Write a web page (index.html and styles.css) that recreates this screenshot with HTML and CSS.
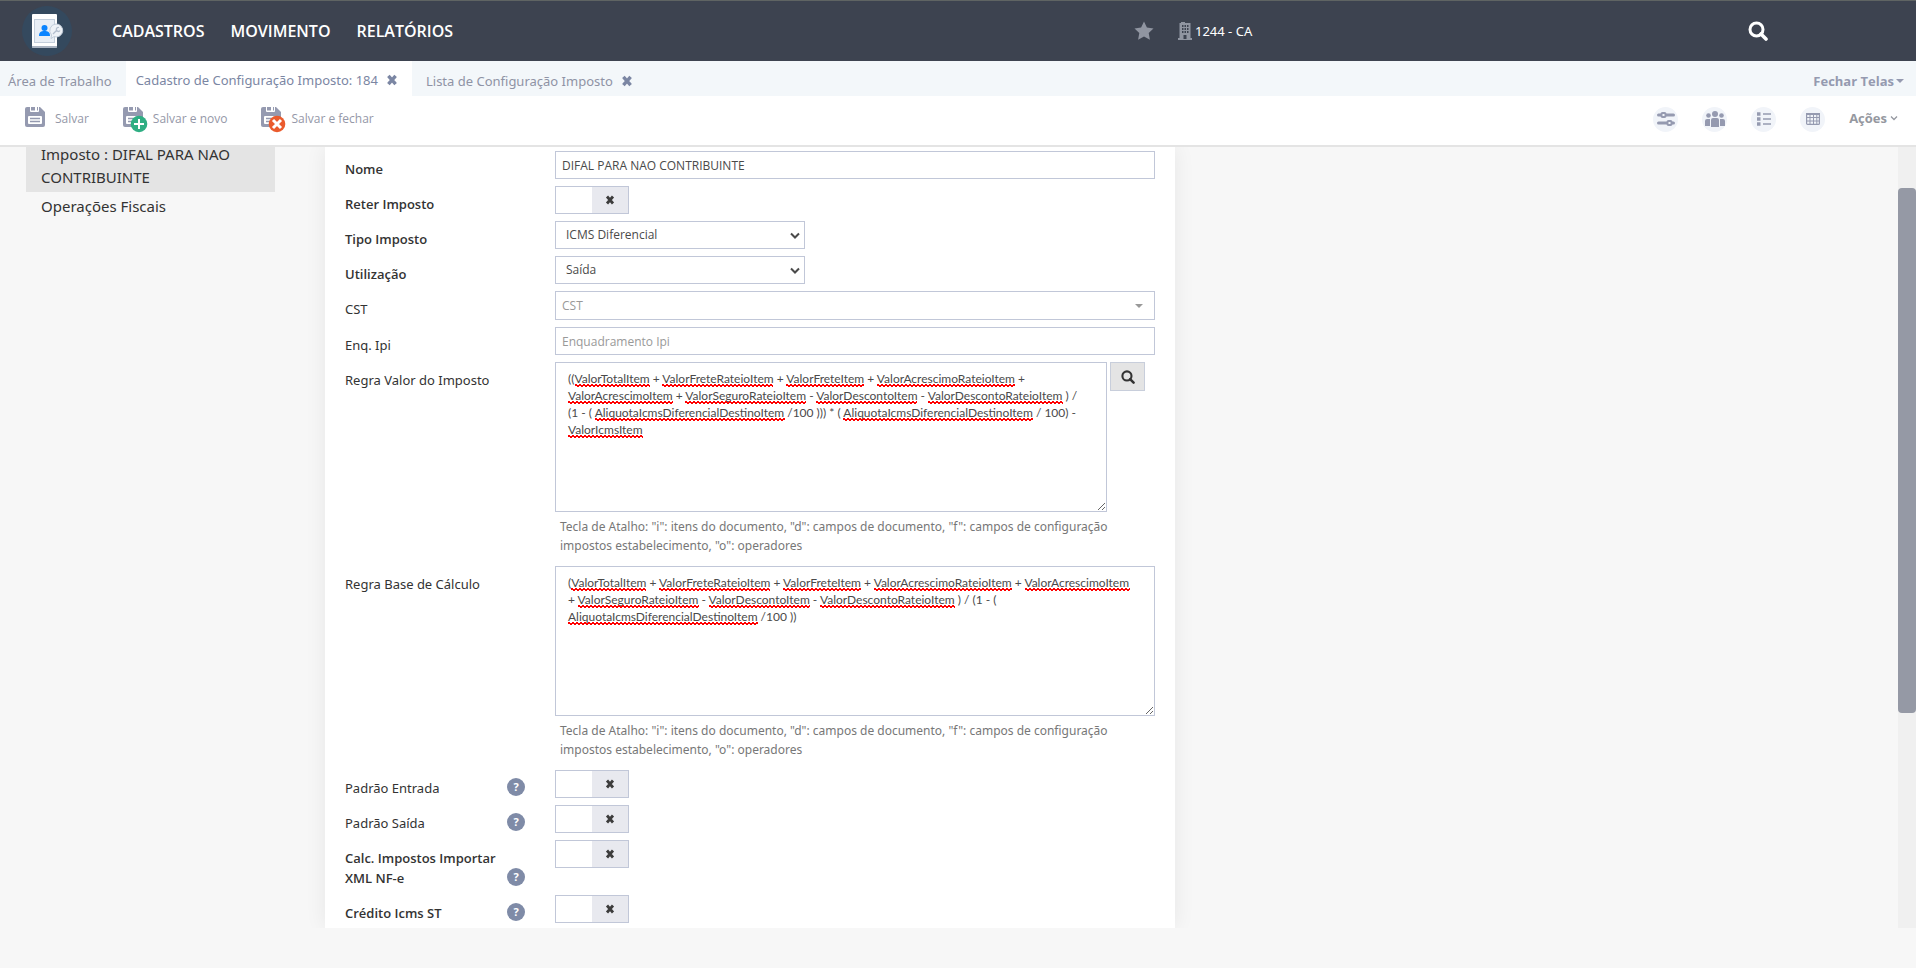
FILE: index.html
```html
<!DOCTYPE html>
<html lang="pt-BR">
<head>
    <meta charset="utf-8">
    <title>Cadastro de Configuração Imposto</title>
    <meta name="viewport" content="width=device-width, initial-scale=1.0">
    <link rel="stylesheet" href="styles.css">
</head>
<body>
    <!-- shared icons -->
    <svg class="sprite" aria-hidden="true">
        <symbol id="ico-x" viewBox="0 0 10 10">
            <path d="M2 1.500L8 8.500M8 1.500L2 8.500" stroke="currentColor" stroke-width="2.800"/>
        </symbol>
        <symbol id="ico-search" viewBox="0 0 20 20">
            <circle cx="8.500" cy="8.500" r="6.500" fill="none" stroke="currentColor" stroke-width="3"/>
            <path d="M13 13l5 5" stroke="currentColor" stroke-width="3.600" stroke-linecap="round"/>
        </symbol>
        <symbol id="ico-save" viewBox="0 0 20 20">
            <path d="M2 0h13l5 5v13a2 2 0 0 1-2 2H2a2 2 0 0 1-2-2V2a2 2 0 0 1 2-2z" fill="#959ab0"/>
            <path d="M5 0h9v4a1 1 0 0 1-1 1H6a1 1 0 0 1-1-1z" fill="#fff"/>
            <path d="M6 0h4v3.500H6zM12 0h1v3.500h-1z" fill="#959ab0"/>
            <rect x="3" y="9" width="14" height="8" rx="1" fill="#fff"/>
            <path d="M5 11.500h10M5 14.500h10" stroke="#959ab0" stroke-width="1.300"/>
        </symbol>
    </svg>

    <header class="topbar">
        <a class="logo" href="#" aria-label="Início">
            <svg width="50" height="50" viewBox="0 0 50 50">
                <circle cx="25" cy="25" r="25" fill="#34495e"/>
                <path d="M10 9a1 1 0 0 1 1-1h23a1 1 0 0 1 1 1v31a2 2 0 0 1-2 2H12a2 2 0 0 1-2-2z" fill="#fff"/>
                <path d="M10 40h25v1a1 1 0 0 1-1 1H11a1 1 0 0 1-1-1z" fill="#aab4c2"/>
                <rect x="12.500" y="13.500" width="20" height="23" fill="#e8eef5" stroke="#c3cedb"/>
                <circle cx="22.500" cy="22" r="3" fill="#0a84ff"/>
                <path d="M17 30c0-4 2-5 5.500-5s5.500 1 5.500 5z" fill="#0a84ff"/>
                <path d="M34 18a6.500 6.500 0 1 1-2 12.600l-3 2 .6-3.600A6.500 6.500 0 0 1 34 18z" fill="#eef2f7" stroke="#c3cedb" stroke-width="1"/>
                <path d="M31 28l4-4M37 21.500a2 2 0 1 0 1 3" stroke="#b4bfce" stroke-width="1.300" fill="none"/>
            </svg>
        </a>
        <nav class="menu">
            <a href="#">CADASTROS</a>
            <a href="#">MOVIMENTO</a>
            <a href="#">RELATÓRIOS</a>
        </nav>
        <div class="company">
            <button class="icon-btn star" aria-label="Favoritos">
                <svg width="20" height="20" viewBox="0 0 20 20"><path d="M10 .5l2.900 6.100 6.600.9-4.800 4.600 1.200 6.700L10 15.600l-5.900 3.200 1.200-6.700L.5 7.500l6.600-.9z" fill="#9095a1"/></svg>
            </button>
            <a class="company-name" href="#">
                <svg width="14" height="18" viewBox="0 0 14 18">
                    <path d="M1.500 1H3V0h4v1h5.500v15H14v2H0v-2h1.500z" fill="#9095a1"/>
                    <path d="M4 3h1.500v2H4zM6.500 3H8v2H6.500zM9 3h1.500v2H9zM4 6h1.500v2H4zM6.500 6H8v2H6.500zM9 6h1.500v2H9zM4 9h1.500v2H4zM6.500 9H8v2H6.500zM9 9h1.500v2H9zM5.500 13h3v4h-3z" fill="#3d4350"/>
                </svg>
                1244 - CA
            </a>
        </div>
        <button class="icon-btn find" aria-label="Pesquisar"><svg width="20" height="20"><use href="#ico-search"/></svg></button>
    </header>

    <div class="tabs">
        <a class="tab" href="#">Área de Trabalho</a>
        <a class="tab tab-active" href="#">Cadastro de Configuração Imposto: 184 <svg width="12" height="12"><use href="#ico-x"/></svg></a>
        <a class="tab" href="#">Lista de Configuração Imposto <svg width="12" height="12"><use href="#ico-x"/></svg></a>
        <button class="close-all">Fechar Telas<span class="caret"></span></button>
    </div>

    <div class="toolbar">
        <button class="tool">
            <svg width="25" height="26" viewBox="0 0 25 26"><use href="#ico-save" width="20" height="20"/></svg>
            Salvar
        </button>
        <button class="tool">
            <svg width="25" height="26" viewBox="0 0 25 26">
                <use href="#ico-save" width="20" height="20"/>
                <circle cx="16" cy="17" r="8.300" fill="#2fae83"/>
                <path d="M16 12v10M11 17h10" stroke="#fff" stroke-width="2"/>
            </svg>
            Salvar e novo
        </button>
        <button class="tool">
            <svg width="25" height="26" viewBox="0 0 25 26">
                <use href="#ico-save" width="20" height="20"/>
                <circle cx="16" cy="17" r="8.300" fill="#ea5b2d"/>
                <path d="M12 13l8 8M20 13l-8 8" stroke="#fff" stroke-width="3"/>
            </svg>
            Salvar e fechar
        </button>
        <div class="tools-right">
            <button class="round" aria-label="Filtros">
                <svg width="18" height="16" viewBox="0 0 18 16" fill="#f1f4f9" stroke="#959ab0" stroke-width="2"><path d="M1.500 4h15" stroke-width="3" stroke-linecap="round"/><path d="M1.500 12h15" stroke-width="3" stroke-linecap="round"/><rect x="4.500" y="2" width="4" height="4" rx="1"/><rect x="10.500" y="10" width="4" height="4" rx="1"/></svg>
            </button>
            <button class="round" aria-label="Usuários">
                <svg width="20" height="16" viewBox="0 0 20 16" fill="#959ab0"><circle cx="10" cy="3" r="3"/><circle cx="3.500" cy="4.500" r="2.300"/><circle cx="16.500" cy="4.500" r="2.300"/><path d="M6 16V9a2 2 0 0 1 2-2h4a2 2 0 0 1 2 2v7zM0 15V10a2 2 0 0 1 2-2h3v7zM20 15V10a2 2 0 0 0-2-2h-3v7z"/></svg>
            </button>
            <button class="round" aria-label="Lista">
                <svg width="14" height="14" viewBox="0 0 14 14" stroke="#959ab0"><path d="M0 2h3.500M0 7h3.500M0 12h3.500" stroke-width="3.400"/><path d="M6 2h8M6 7h8M6 12h8" stroke-width="1.700"/></svg>
            </button>
            <button class="round" aria-label="Tabela">
                <svg width="14" height="12" viewBox="0 0 14 12" fill="none" stroke="#959ab0"><rect x=".6" y=".6" width="12.800" height="10.800" rx="1" stroke-width="1.200"/><path d="M0 1h14" stroke-width="2"/><path d="M4 1v11M7.500 1v11M10.800 1v11M0 4.500h14M0 8h14"/></svg>
            </button>
            <button class="actions">Ações <svg width="8" height="5" viewBox="0 0 8 5"><path d="M1 .5l3 3 3-3" fill="none" stroke="currentColor" stroke-width="1.300"/></svg></button>
        </div>
    </div>

    <main class="content">
        <aside class="sidebar">
            <a class="side-item side-active" href="#">Imposto : DIFAL PARA NAO CONTRIBUINTE</a>
            <a class="side-item" href="#">Operações Fiscais</a>
        </aside>

        <form class="card">
            <label class="label required" for="nome">Nome</label>
            <input class="field" id="nome" type="text" value="DIFAL PARA NAO CONTRIBUINTE">

            <label class="label required" for="reter">Reter Imposto</label>
            <div class="switch"><input type="checkbox" id="reter"><svg width="10" height="10"><use href="#ico-x"/></svg></div>

            <label class="label required" for="tipo">Tipo Imposto</label>
            <div class="select"><select class="field" id="tipo"><option>ICMS Diferencial</option></select><svg width="10" height="7" viewBox="0 0 10 7"><path d="M1 1.500l4 4 4-4" fill="none" stroke="#4a4a4a" stroke-width="2"/></svg></div>

            <label class="label required" for="utilizacao">Utilização</label>
            <div class="select"><select class="field" id="utilizacao"><option>Saída</option></select><svg width="10" height="7" viewBox="0 0 10 7"><path d="M1 1.500l4 4 4-4" fill="none" stroke="#4a4a4a" stroke-width="2"/></svg></div>

            <label class="label" for="cst">CST</label>
            <div class="select select-wide"><select class="field" id="cst"><option>CST</option></select><span class="caret"></span></div>

            <label class="label" for="ipi">Enq. Ipi</label>
            <input class="field" id="ipi" type="text" placeholder="Enquadramento Ipi">

            <label class="label" for="regra-valor">Regra Valor do Imposto</label>
            <div class="rule">
                <div class="rule-row">
                    <div class="editor">
                        <div class="marks" aria-hidden="true"></div>
                        <textarea id="regra-valor">((ValorTotalItem + ValorFreteRateioItem + ValorFreteItem + ValorAcrescimoRateioItem +
ValorAcrescimoItem + ValorSeguroRateioItem - ValorDescontoItem - ValorDescontoRateioItem ) /
(1 - ( AliquotaIcmsDiferencialDestinoItem /100 ))) * ( AliquotaIcmsDiferencialDestinoItem / 100) -
ValorIcmsItem</textarea>
                    </div>
                    <button class="lookup" type="button" aria-label="Buscar"><svg width="14" height="14"><use href="#ico-search"/></svg></button>
                </div>
                <p class="hint">Tecla de Atalho: "i": itens do documento, "d": campos de documento, "f": campos de configuração impostos estabelecimento, "o": operadores</p>
            </div>

            <label class="label" for="regra-base">Regra Base de Cálculo</label>
            <div class="rule">
                <div class="editor">
                    <div class="marks" aria-hidden="true"></div>
                    <textarea id="regra-base">(ValorTotalItem + ValorFreteRateioItem + ValorFreteItem + ValorAcrescimoRateioItem + ValorAcrescimoItem
+ ValorSeguroRateioItem - ValorDescontoItem - ValorDescontoRateioItem ) / (1 - (
AliquotaIcmsDiferencialDestinoItem /100 ))</textarea>
                </div>
                <p class="hint">Tecla de Atalho: "i": itens do documento, "d": campos de documento, "f": campos de configuração impostos estabelecimento, "o": operadores</p>
            </div>

            <div class="label-help"><label class="label" for="entrada">Padrão Entrada</label><span class="help">?</span></div>
            <div class="switch"><input type="checkbox" id="entrada"><svg width="10" height="10"><use href="#ico-x"/></svg></div>

            <div class="label-help"><label class="label" for="saida">Padrão Saída</label><span class="help">?</span></div>
            <div class="switch"><input type="checkbox" id="saida"><svg width="10" height="10"><use href="#ico-x"/></svg></div>

            <div class="label-help"><label class="label required" for="xml">Calc. Impostos Importar XML NF-e</label><span class="help">?</span></div>
            <div class="switch"><input type="checkbox" id="xml"><svg width="10" height="10"><use href="#ico-x"/></svg></div>

            <div class="label-help"><label class="label required" for="credito">Crédito Icms ST</label><span class="help">?</span></div>
            <div class="switch"><input type="checkbox" id="credito"><svg width="10" height="10"><use href="#ico-x"/></svg></div>
        </form>

        <div class="scroll"><div class="thumb"></div></div>
    </main>

    <script src="script.js"></script>
</body>
</html>
```
FILE: styles.css
```css
* {
    box-sizing: border-box;
}
body {
    margin: 0;
    height: 100vh;
    display: flex;
    flex-direction: column;
    overflow: hidden;
    background: #f7f7f7;
    color: #333;
    font-family: "Noto Sans", "Open Sans", sans-serif;
    font-size: 13px;
    line-height: 20px;
}
a {
    color: inherit;
    text-decoration: none;
}
button, input, select, textarea {
    font: inherit;
    color: inherit;
    margin: 0;
}
button {
    border: 0;
    padding: 0;
    background: none;
    cursor: pointer;
}
svg {
    flex: none;
}
.sprite {
    position: absolute;
    width: 0;
    height: 0;
}
.caret {
    border: 4px solid transparent;
    border-top-color: currentColor;
    border-bottom: 0;
}

/* top bar */
.topbar {
    display: grid;
    grid-template-columns: 112px 1022px 1fr 168px;
    align-items: center;
    height: 61px;
    flex: none;
    border-top: 1px solid #5f6463;
    background: #3d4350;
    color: #fff;
}
.logo {
    display: flex;
    padding-left: 22px;
}
.menu {
    display: flex;
    gap: 26px;
    font-family: "Open Sans", sans-serif;
    font-size: 16px;
    font-weight: 600;
}
.icon-btn {
    display: flex;
}
.company {
    display: flex;
    align-items: center;
    gap: 24px;
}
.company-name {
    display: flex;
    align-items: center;
    gap: 3px;
}

/* tabs */
.tabs {
    display: flex;
    flex: none;
    height: 35px;
    background: #f3f7fa;
    color: #8f93a5;
}
.tab {
    display: flex;
    align-items: center;
    gap: 8px;
    padding: 4px 14px 0;
}
.tab:first-child {
    padding-left: 8px;
}
.tab svg, .tab-active {
    color: #7b86a3;
}
.tab-active {
    padding: 2px 14px 0 10px;
    background: #fff;
}
.close-all {
    display: flex;
    align-items: center;
    gap: 2px;
    margin-left: auto;
    padding: 4px 12px 0 0;
    font-family: "Open Sans", sans-serif;
    font-weight: 700;
    color: #959ab0;
}

/* toolbar */
.toolbar {
    display: flex;
    align-items: center;
    flex: none;
    gap: 34px;
    height: 51px;
    padding: 0 18px 3px 25px;
    border-bottom: 2px solid #e4e4e4;
    background: #fff;
}
.tool {
    display: flex;
    align-items: center;
    gap: 5px;
    font-family: "Open Sans", sans-serif;
    font-size: 12px;
    color: #9598a8;
}
.tool svg {
    margin-top: 2px;
}
.tools-right {
    display: flex;
    align-items: center;
    gap: 24px;
    margin-left: auto;
}
.round {
    display: flex;
    align-items: center;
    justify-content: center;
    width: 25px;
    height: 25px;
    border-radius: 50%;
    background: #f1f4f9;
}
.actions {
    display: flex;
    align-items: center;
    gap: 3px;
    padding-bottom: 2px;
    font-family: "Open Sans", sans-serif;
    font-weight: 700;
    color: #9598a0;
}

/* content */
.content {
    display: flex;
    flex: 1;
    min-height: 0;
    margin-bottom: 40px;
    overflow: hidden;
}
.sidebar {
    width: 249px;
    margin: -4px 50px 0 26px;
    flex: none;
    font-size: 15px;
    line-height: 23px;
}
.side-item {
    display: block;
    padding: 3px 15px;
}
.side-active {
    padding-top: 0;
    background: #e4e4e4;
}

/* form */
.card {
    display: grid;
    grid-template-columns: 180px 600px;
    gap: 7px 30px;
    align-content: start;
    align-items: start;
    width: 850px;
    padding: 4px 20px;
    background: #fff;
    box-shadow: 0 0 20px rgba(0, 0, 0, 0.07);
}
.label {
    padding-top: 8px;
}
.required {
    font-family: "Open Sans", sans-serif;
    font-weight: 600;
}
.label-help {
    display: flex;
    align-items: flex-end;
    justify-content: space-between;
}
.help {
    flex: none;
    width: 18px;
    height: 18px;
    margin-bottom: 2px;
    border-radius: 50%;
    background: #7f8ba7;
    color: #fff;
    font-size: 11px;
    font-weight: 700;
    line-height: 18px;
    text-align: center;
}
.field {
    width: 100%;
    height: 28px;
    padding: 0 6px;
    border: 1px solid #c1c7d8;
    border-radius: 0;
    background: #fff;
    color: #4a4a4a;
    font-family: "Open Sans", sans-serif;
    font-size: 12px;
}
.field::placeholder {
    color: #999;
}
.select {
    display: grid;
    width: 250px;
    align-items: center;
}
.select > * {
    grid-area: 1 / 1;
}
.select .field {
    appearance: none;
    padding: 0 10px;
}
.select svg, .select .caret {
    justify-self: end;
    margin-right: 5px;
    pointer-events: none;
}
.select-wide {
    width: 100%;
}
.select-wide .field {
    height: 29px;
    padding: 0 6px;
    color: #999;
}
.select .caret {
    margin-right: 12px;
    color: #999;
}
.switch {
    display: grid;
    grid-template-columns: 1fr 1fr;
    align-items: center;
    justify-items: center;
    width: 74px;
    height: 28px;
    border: 1px solid #c1c7d8;
    background: linear-gradient(to right, #fff 50%, #e8e9ef 50%);
    color: #3c3c3c;
}
.switch input {
    appearance: none;
    grid-area: 1 / 1 / 2 / 3;
    width: 100%;
    height: 100%;
}
.switch svg {
    grid-area: 1 / 2;
    pointer-events: none;
}
.rule-row {
    display: flex;
    align-items: flex-start;
    gap: 3px;
    padding-right: 10px;
}
.editor {
    position: relative;
    display: grid;
    flex: 1;
}
.editor textarea, .marks {
    grid-area: 1 / 1;
    width: 100%;
    height: 150px;
    padding: 7px 8px 7px 12px;
    border: 1px solid #c1c7d8;
    font-family: Lato, sans-serif;
    font-size: 12px;
    line-height: 17px;
    white-space: pre-wrap;
    overflow: hidden;
}
.editor textarea {
    display: block;
    background: none;
    color: #4a4a4a;
    resize: both;
}
/* spelling marks drawn behind the textarea */
.marks i {
    position: absolute;
    height: 3px;
    background:
        linear-gradient(45deg, transparent 35%, #f00 35%, #f00 65%, transparent 65%) 0 0 / 4px 3px,
        linear-gradient(135deg, transparent 35%, #f00 35%, #f00 65%, transparent 65%) 2px 0 / 4px 3px;
}
.lookup {
    display: flex;
    align-items: center;
    justify-content: center;
    width: 35px;
    height: 29px;
    border: 1px solid #c8cedb;
    background: #e4e4e4;
    color: #333;
}
.hint {
    margin: 0;
    padding: 5px 5px 4px;
    line-height: 19px;
    font-size: 12px;
    color: #777;
}

/* scrollbar */
.scroll {
    width: 18px;
    margin-left: auto;
    padding-top: 41px;
    background: #f0f0f0;
}
.thumb {
    height: 71%;
    border-radius: 4px;
    background: #9599a5;
}
```
FILE: script.js
```javascript
// underline the field names the spell checker does not know
document.querySelectorAll('.editor').forEach(editor => {
    const marks = editor.querySelector('.marks')
    const textarea = editor.querySelector('textarea')

    const renderMarks = () => {
        // lay the text out once to find the words, then keep only the underlines
        marks.innerHTML = textarea.value.replace(/\w+Item/g, '<span>$&</span>')
        const box = editor.getBoundingClientRect()
        let html = ''
        marks.querySelectorAll('span').forEach(word => {
            const rect = word.getBoundingClientRect()
            const left = Math.round(rect.left - box.left)
            const top = Math.round((rect.top + rect.bottom) / 2 - box.top + 5)
            html += `<i style="left:${left}px;top:${top}px;width:${Math.round(rect.width)}px"></i>`
        })
        marks.innerHTML = html
    }

    textarea.addEventListener('input', renderMarks)
    renderMarks()
})
```
